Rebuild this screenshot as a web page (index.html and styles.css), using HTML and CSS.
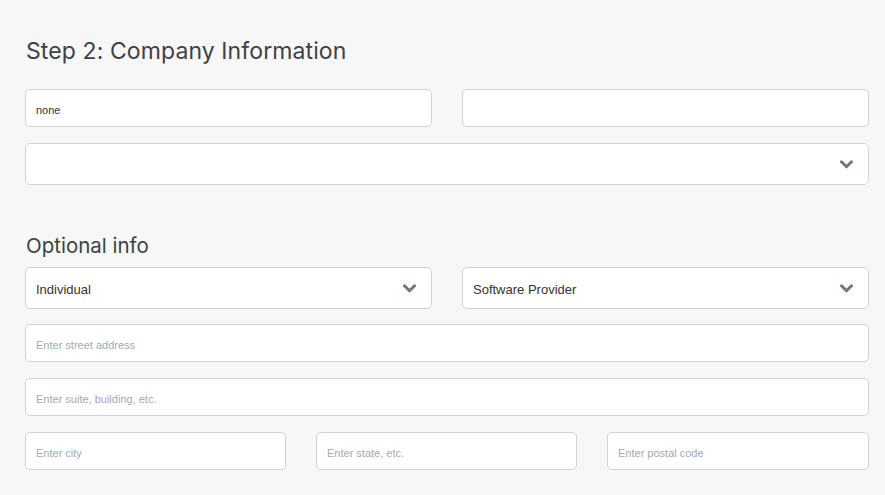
FILE: index.html
```html
<!DOCTYPE html>
<html>
<head>
<meta charset="utf-8">
<link rel="stylesheet" href="styles.css">
</head>
<body>
<div class="page">
  <h2 class="title">Step 2: Company Information</h2>
  <div class="row two">
    <div class="field input"><span class="value">none</span></div>
    <div class="field input"></div>
  </div>
  <div class="row">
    <div class="field select">
      <span class="value"></span>
      <svg class="chev" viewBox="0 0 14 9" width="13" height="9"><path d="M1.6 1.6 L7 7 L12.4 1.6" fill="none" stroke="#6c7784" stroke-width="3.2" stroke-linecap="round" stroke-linejoin="round"/></svg>
    </div>
  </div>
  <h3 class="subtitle">Optional info</h3>
  <div class="row two opt">
    <div class="field select"><span class="value">Individual</span>
      <svg class="chev" viewBox="0 0 14 9" width="13" height="9"><path d="M1.6 1.6 L7 7 L12.4 1.6" fill="none" stroke="#6c7784" stroke-width="3.2" stroke-linecap="round" stroke-linejoin="round"/></svg>
    </div>
    <div class="field select"><span class="value">Software Provider</span>
      <svg class="chev" viewBox="0 0 14 9" width="13" height="9"><path d="M1.6 1.6 L7 7 L12.4 1.6" fill="none" stroke="#6c7784" stroke-width="3.2" stroke-linecap="round" stroke-linejoin="round"/></svg>
    </div>
  </div>
  <div class="row">
    <div class="field input"><span class="ph">Enter street address</span></div>
  </div>
  <div class="row">
    <div class="field input"><span class="ph">Enter suite, building, etc.</span></div>
  </div>
  <div class="row three">
    <div class="field input"><span class="ph">Enter city</span></div>
    <div class="field input"><span class="ph">Enter state, etc.</span></div>
    <div class="field input"><span class="ph">Enter postal code</span></div>
  </div>
</div>
</body>
</html>
```
FILE: styles.css
```css
html, body {
  margin: 0;
  padding: 0;
  background: #f7f7f7;
}
.page {
  width: 844px;
  padding: 36px 0 0 25px;
  display: flex;
  flex-direction: column;
  gap: 16px;
  font-family: "Liberation Sans", Arial, sans-serif;
}
.title {
  margin: 0 0 7px 1px;
  font-family: Inter, "Noto Sans", sans-serif;
  font-weight: 400;
  font-size: 23px;
  line-height: 30px;
  color: #3d4247;
  letter-spacing: 0.1px;
}
.subtitle {
  margin: 35px 0 -5px 1px;
  font-family: Inter, "Noto Sans", sans-serif;
  font-weight: 400;
  font-size: 20.5px;
  line-height: 20px;
  color: #3d4247;
}
.row {
  display: grid;
  grid-template-columns: 1fr;
  column-gap: 30px;
}
.row.two { grid-template-columns: 1fr 1fr; }
.row.opt { margin-bottom: -1px; }
.row.three { grid-template-columns: 261px 261px 262px; }
.field {
  box-sizing: border-box;
  background: #fff;
  border: 1px solid #d2d2d2;
  border-radius: 5px;
  display: flex;
  align-items: center;
  padding: 0 10px;
}
.input { height: 38px; padding-top: 3px; }
.select { height: 42px; justify-content: space-between; padding-right: 15px; }
.value {
  font-size: 11px;
  color: #333;
}
.select .value { font-size: 13px; color: #333; padding-top: 2px; }
.ph {
  font-size: 11px;
  color: #a3aab2;
}
.chev { display: block; }
```
